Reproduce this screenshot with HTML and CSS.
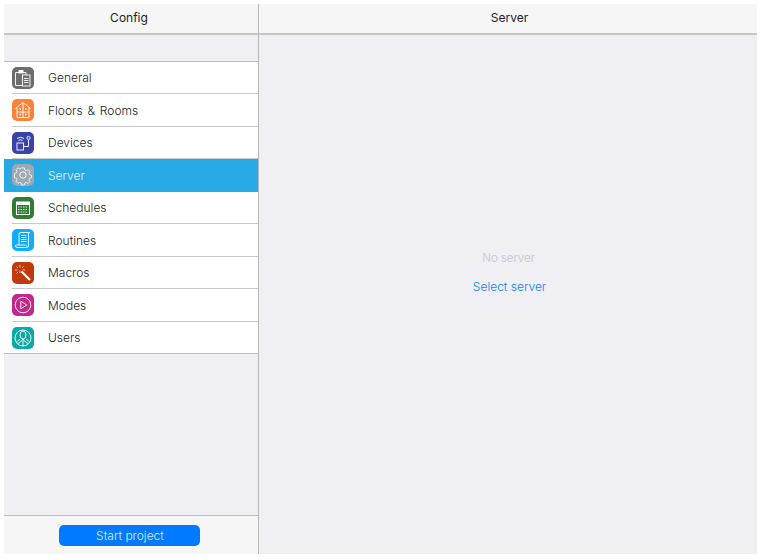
FILE: index.html
```html
<!DOCTYPE html>
<html lang="en">
<head>
<meta charset="utf-8">
<title>Config</title>
<link rel="stylesheet" href="styles.css">
</head>
<body>
<div class="app">
  <aside class="sidebar">
    <header class="bar bar-side">Config</header>
    <div class="spacer"></div>
    <ul class="menu">
      <li class="row"><svg class="icon" viewBox="0 0 22 22"><rect width="22" height="22" rx="5" fill="#6d6d6d"/><g fill="none" stroke="#fff" stroke-width=".9"><path d="M7 5.500H3.500V18.500H10M11 5.500h3V8"/><rect x="7" y="3.500" width="4" height="2.500" fill="#fff"/><rect x="10.500" y="8" width="7.500" height="11"/><path d="M12 11.500h4.500M12 13.500h4.500M12 15.500h4.500"/></g></svg><span class="label">General</span></li>
      <li class="row"><svg class="icon" viewBox="0 0 22 22"><rect width="22" height="22" rx="5" fill="#fb8338"/><g fill="none" stroke="#fff" stroke-width=".9"><path d="M3.500 9.500 11 3.500l7.500 6M5 8.500v10h12v-10M11 4v14.500M5 13h12"/><path d="M7.500 10h1.500M13 10h1.500M7.500 15.500h1.500M13 15.500h1.500" stroke-width="1.400"/></g></svg><span class="label">Floors &amp; Rooms</span></li>
      <li class="row"><svg class="icon" viewBox="0 0 22 22"><rect width="22" height="22" rx="5" fill="#3a43a8"/><g fill="none" stroke="#fff" stroke-width=".9"><path d="M5 6.500q3.500-2.500 7 0M6.500 8.500q2-1.500 4 0"/><rect x="5" y="11" width="6.500" height="7"/><path d="M11.500 14.500H16.500V8"/><circle cx="16.500" cy="6" r="1.600"/></g></svg><span class="label">Devices</span></li>
      <li class="row row-active"><svg class="icon" viewBox="0 0 22 22"><rect width="22" height="22" rx="5" fill="#9aa9b2"/><g fill="none" stroke="#fff" stroke-width=".9"><circle cx="11" cy="11" r="3.200"/><path d="M9.500 3.500h3l.5 2.200 1.700.8 2-1.100 2 2-1.100 2 .8 1.700 2.100.6v2.600l-2.100.6-.8 1.700 1.100 2-2 2-2-1.100-1.700.8-.5 2.200h-3l-.5-2.200-1.700-.8-2 1.100-2-2 1.100-2-.8-1.700-2.100-.6V9.700l2.100-.6.8-1.700-1.100-2 2-2 2 1.100 1.700-.8z" transform="translate(1.100 .8) scale(.9)"/></g></svg><span class="label">Server</span></li>
      <li class="row"><svg class="icon" viewBox="0 0 22 22"><rect width="22" height="22" rx="5" fill="#2f7d32"/><rect x="4" y="4.500" width="14" height="13.500" fill="#fff"/><rect x="5" y="8" width="12" height="9" fill="#2f7d32"/><path d="M6 10h10M6 12.500h10M6 15h10" stroke="#dcecdc" stroke-width="1" stroke-dasharray="1.500 1"/></svg><span class="label">Schedules</span></li>
      <li class="row"><svg class="icon" viewBox="0 0 22 22"><rect width="22" height="22" rx="5" fill="#0fadff"/><g fill="none" stroke="#fff" stroke-width=".9"><path d="M7 16V5q0-1.500 1.500-1.500H18q-1.500 0-1.500 1.500v11.500q0 2-2 2H5q-1.500 0-1.500-1.500T5 16h8.500q1 0 1 1.500"/><path d="M9 6.500h5.500M9 8.500h5.500M9 10.500h5.500M9 12.500h5.500"/></g></svg><span class="label">Routines</span></li>
      <li class="row"><svg class="icon" viewBox="0 0 22 22"><rect width="22" height="22" rx="5" fill="#c0390f"/><path d="M9.500 9.500 18 18" stroke="#fff" stroke-width="2.200"/><path d="M8 3v2.500M8 8.500V11M3 8h2.500M10.500 8H13M4.500 4.500l1.500 1.500M11.500 4.500 10 6M4.500 11.500 6 10" stroke="#f6c9b5" stroke-width=".9"/></svg><span class="label">Macros</span></li>
      <li class="row"><svg class="icon" viewBox="0 0 22 22"><rect width="22" height="22" rx="5" fill="#c4278c"/><g fill="none" stroke="#fff" stroke-width=".9"><circle cx="11" cy="11" r="7.800"/><path d="M8.800 7.200v7.600l6-3.800z"/></g></svg><span class="label">Modes</span></li>
      <li class="row"><svg class="icon" viewBox="0 0 22 22"><rect width="22" height="22" rx="5" fill="#0aa9a5"/><g fill="none" stroke="#fff" stroke-width=".9"><circle cx="11" cy="11" r="8"/><ellipse cx="11" cy="8" rx="3" ry="4"/><path d="M11 12v7M6 16.500q3-1 5-4.500 2 3.500 5 4.500M8 12.500q-2.500 1-3.500 2.500M14 12.500q2.500 1 3.500 2.500"/></g></svg><span class="label">Users</span></li>
    </ul>
    <div class="fill"></div>
    <footer class="footer"><button class="start" type="button">Start project</button></footer>
  </aside>
  <main class="detail">
    <header class="bar bar-main">Server</header>
    <div class="empty">
      <p class="empty-text">No server</p>
      <a class="select" href="#">Select server</a>
    </div>
  </main>
</div>
</body>
</html>
```
FILE: styles.css
```css
* { box-sizing: border-box; }
html, body { height: 100%; }
body {
  margin: 0;
  padding: 4px 5px 5px 4px;
  background: #fff;
  font-family: "Inter", "Liberation Sans", sans-serif;
  font-weight: 300;
  font-size: 12px;
  color: #222;
}
.app {
  display: flex;
  height: 550px;
  background: #efeff4;
}
.sidebar {
  width: 255px;
  display: flex;
  flex-direction: column;
  border-right: 1px solid #b8b8bb;
}
.detail {
  flex: 1;
  display: flex;
  flex-direction: column;
}
.bar {
  height: 31px;
  flex: none;
  display: flex;
  align-items: center;
  justify-content: center;
  padding-bottom: 2px;
  background: #f6f6f7;
  border-bottom: 2px solid #c6c6c8;
  color: #1c1c1c;
  font-weight: 400;
}
.bar-side { padding-right: 4px; }
.bar-main { padding-left: 3px; }
.spacer { height: 26.5px; flex: none; border-bottom: 1px solid #bcbcbf; }
.menu { list-style: none; margin: 0; padding: 0; background: #fff; flex: none; }
.row {
  position: relative;
  height: 32.5px;
  display: flex;
  align-items: center;
  gap: 14px;
  padding-left: 8px;
  word-spacing: 1.5px;
}
.row::after {
  content: "";
  position: absolute;
  left: 8px;
  right: 0;
  bottom: 0;
  height: 1px;
  background: #c8c8ca;
}
.row:last-child::after { left: 0; background: #bcbcbf; }
.row-active { background: #27a9e3; color: #e6f4fb; }
.row-active::after { display: none; }
.icon { width: 22px; height: 22px; flex: none; display: block; }
.fill { flex: 1; }
.footer {
  height: 39px;
  flex: none;
  display: flex;
  justify-content: center;
  padding: 9px 4px 0 0;
  background: #f6f6f7;
  border-top: 1px solid #bcbcbf;
}
.start {
  width: 141px;
  height: 21px;
  padding: 0 0 0 2px;
  border: 0;
  border-radius: 5px;
  background: #007aff;
  color: #dcecff;
  font: inherit;
}
.empty {
  flex: 1;
  display: flex;
  flex-direction: column;
  align-items: center;
  padding: 215px 0 0 3px;
}
.empty-text { margin: 0 2px 0 0; color: #c4c4c8; line-height: 16px; font-size: 11.5px; }
.select { margin-top: 13px; color: #0f7ff5; text-decoration: none; line-height: 16px; }
```
